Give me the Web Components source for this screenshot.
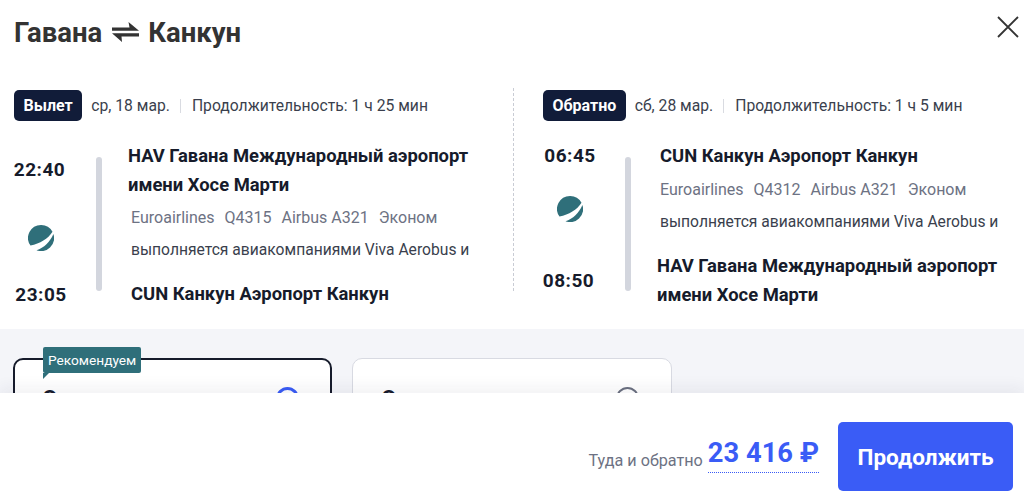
<!DOCTYPE html>
<html lang="ru">
<head>
<meta charset="utf-8">
<title>Гавана — Канкун</title>
<style>
  html, body { margin: 0; height: 500px; overflow: hidden; background: #fff; }
  body { font-family: Roboto, "Noto Sans", sans-serif; color: #161b2b; }
  .legs { display: flex; height: 241px; }
</style>
</head>
<body>
<route-title from="Гавана" to="Канкун"></route-title>
<div class="legs">
  <flight-leg class="out" label="Вылет" date="ср, 18 мар." duration="1 ч 25 мин" dep="22:40" arr="23:05">
    <div slot="start" style="margin-left:-3px">HAV Гавана Международный аэропорт<br>имени Хосе Марти</div>
    <span slot="meta">Euroairlines</span><span slot="meta">Q4315</span><span slot="meta">Airbus A321</span><span slot="meta">Эконом</span>
    <div slot="end">CUN Канкун Аэропорт Канкун</div>
  </flight-leg>
  <flight-leg class="back" divided label="Обратно" date="сб, 28 мар." duration="1 ч 5 мин" dep="06:45" arr="08:50">
    <div slot="start">CUN Канкун Аэропорт Канкун</div>
    <span slot="meta">Euroairlines</span><span slot="meta">Q4312</span><span slot="meta">Airbus A321</span><span slot="meta">Эконом</span>
    <div slot="end" style="margin-left:-3px">HAV Гавана Международный аэропорт<br>имени Хосе Марти</div>
  </flight-leg>
</div>
<tariff-row>
  <tariff-card selected tag="Рекомендуем" name="Эконом"></tariff-card>
  <tariff-card name="Эконом"></tariff-card>
</tariff-row>
<price-footer caption="Туда и обратно" price="23 416 ₽" action="Продолжить"></price-footer>

<script>
class RouteTitle extends HTMLElement {
  constructor() {
    super();
    this._root = this.attachShadow({mode: 'open'});
    this._root.innerHTML = `
    <style>
      :host { display: flex; align-items: center; height: 88px; box-sizing: border-box; padding: 0 5px 22px 14px; }
      h1 { margin: 0; font-size: 27.500px; font-weight: 700; line-height: 36px; color: #333; display: flex; align-items: center; gap: 9px; }
      h1 svg { margin-top: -3px; }
      button { margin-left: auto; margin-top: -12px; border: 0; padding: 0; background: none; width: 22px; height: 22px; }
      svg { display: block; }
    </style>
    <h1>${this.getAttribute('from')}
      <svg width="28" height="20" viewBox="0 0 28 20"><path fill="#333" d="M1 5.500h17.500l-1-5.500 10.500 8.800H1zM1 11.200h27v3.300H10.500l.5 5.500z"/></svg>
      ${this.getAttribute('to')}</h1>
    <button aria-label="Закрыть"><svg width="22" height="22" viewBox="0 0 22 22"><path d="M1 1l20 20M21 1L1 21" stroke="#333" stroke-width="1.800" fill="none"/></svg></button>`;
  }
}

class FlightLeg extends HTMLElement {
  constructor() {
    super();
    const a = name => this.getAttribute(name);
    this._root = this.attachShadow({mode: 'open'});
    this._root.innerHTML = `
    <style>
      :host { display: block; flex: 0 0 513px; box-sizing: border-box; padding: 2px 0 0 14px; position: relative; }
      :host([divided]) { flex: 1 1 0; padding-left: 30px; }
      :host([divided])::before { content: ""; position: absolute; left: 0; top: 0; height: 203px; border-left: 1px dashed #c9ccd4; }
      .head { display: flex; align-items: center; height: 31px; font-size: 15.700px; color: #3a3f4d; }
      .pill { background: #111c39; color: #fff; font-size: 16px; font-weight: 700; border-radius: 5px; height: 31px; line-height: 31px; padding: 0 9.500px; margin-right: 9px; }
      .sep { width: 1px; height: 14px; background: #d9dbe1; margin: 0 11px 0 10px; }
      .body { display: grid; grid-template-columns: 82px 35px 1fr; margin-top: 22px; height: 165px; }
      .times { width: 51px; display: flex; flex-direction: column; align-items: center; font-size: 19px; letter-spacing: .5px; font-weight: 700; line-height: 24px; white-space: nowrap; }
      .bar { width: 6px; background: #d3d6de; border-radius: 3px; margin-top: 14px; height: 134px; }
      .route { font-size: 18.400px; font-weight: 700; line-height: 29px; }
      .meta { display: flex; gap: 10px; font-size: 16px; color: #6d7283; line-height: 24px; }
      .note { font-size: 15.650px; color: #3a3f4d; line-height: 24px; white-space: nowrap; }
      svg { display: block; }
    </style>
    <div class="head">
      <span class="pill">${a('label')}</span><span>${a('date')}</span><span class="sep"></span><span>Продолжительность: ${a('duration')}</span>
    </div>
    <div class="body">
      <div class="times">
        <span class="dep">${a('dep')}</span>
        <svg class="logo" width="26" height="26" viewBox="0 0 26 26"><path fill="#2f6f7a" fill-rule="evenodd" d="M13 0a13 13 0 0 1 11.500 6.800C20 14 12 18.500 2.500 20.600A13 13 0 0 1 13 0zM25.400 9A13 13 0 0 1 8.500 25.200C16 23 22 17 25.400 9z"/></svg>
        <span class="arr">${a('arr')}</span>
      </div>
      <div class="bar"></div>
      <div class="info">
        <div class="route"><slot name="start"></slot></div>
        <div class="meta"><slot name="meta"></slot></div>
        <div class="note">выполняется авиакомпаниями Viva Aerobus и</div>
        <div class="route end"><slot name="end"></slot></div>
      </div>
    </div>`;
    const out = !this.hasAttribute('divided');
    const q = s => this._root.querySelector(s);
    // the two legs place their rows a little differently
    q('.dep').style.margin = out ? '15px 0 0 0' : '1px 0 0 3px';
    q('.logo').style.margin = out ? '43px 0 0 2px' : '28px 0 0 3px';
    q('.arr').style.margin = out ? '32px 0 0 3px' : '47px 0 0 0';
    q('.meta').style.margin = out ? '7px 0 0' : '8px 0 0';
    q('.note').style.margin = '8px 0 0';
    q('.end').style.margin = '17px 0 0';
    q('.info').style.marginTop = '-2px';
  }
}

class TariffRow extends HTMLElement {
  constructor() {
    super();
    this._root = this.attachShadow({mode: 'open'});
    this._root.innerHTML = `
    <style>
      :host { display: flex; gap: 20px; height: 64px; box-sizing: border-box; padding: 29px 0 0 13px; background: #f4f5f9; overflow: hidden; }
    </style>
    <slot></slot>`;
  }
}

class TariffCard extends HTMLElement {
  constructor() {
    super();
    const tag = this.getAttribute('tag');
    this._root = this.attachShadow({mode: 'open'});
    this._root.innerHTML = `
    <style>
      :host { display: block; position: relative; box-sizing: border-box; width: 320px; height: 120px; background: #fff; border: 1px solid #d8dae2; border-radius: 10px; padding: 25px 32px 0 29px; }
      :host([selected]) { width: 319px; border: 2px solid #161b2b; padding: 24px 31px 0 28px; }
      .row { display: flex; justify-content: space-between; align-items: flex-start; }
      .name { font-size: 22px; font-weight: 700; line-height: 30px; color: #161b2b; }
      .radio { width: 23px; height: 23px; box-sizing: border-box; border: 2px solid #6b7080; border-radius: 50%; margin-top: 3px; }
      :host([selected]) .radio { border: 3px solid #3a5cf6; }
      .tag { position: absolute; left: 28px; top: -13px; height: 26px; line-height: 26px; padding: 0 5px; background: #2f6f7a; color: #fff; font-size: 13.700px; border-radius: 2px; }
      .tag::after { content: ""; position: absolute; left: 0; top: 26px; border-top: 6px solid #2f6f7a; border-right: 6px solid transparent; }
    </style>
    ${tag ? `<div class="tag">${tag}</div>` : ''}
    <div class="row"><span class="name">${this.getAttribute('name')}</span><span class="radio"></span></div>`;
  }
}

class PriceFooter extends HTMLElement {
  constructor() {
    super();
    this._root = this.attachShadow({mode: 'open'});
    this._root.innerHTML = `
    <style>
      :host { display: flex; align-items: flex-end; justify-content: flex-end; position: relative; height: 107px; box-sizing: border-box; padding: 0 11px 9px 0; background: #fff; box-shadow: 0 -6px 14px rgba(30,35,60,.06); }
      .cap { font-size: 16.200px; line-height: 20px; color: #6d7283; margin: 0 5px 20px 0; }
      .price { font-size: 27.300px; font-weight: 700; line-height: 36px; color: #3a5cf6; border-bottom: 1px dotted #3a5cf6; margin: 0 19px 18px 0; padding-bottom: 1px; }
      button { width: 175px; height: 69px; border: 0; border-radius: 5px; background: #3a5cf6; color: #fff; font: 700 22.500px Roboto, "Noto Sans", sans-serif; }
    </style>
    <span class="cap">${this.getAttribute('caption')}</span>
    <span class="price">${this.getAttribute('price')}</span>
    <button>${this.getAttribute('action')}</button>`;
  }
}

window.customElements.define('route-title', RouteTitle);
window.customElements.define('flight-leg', FlightLeg);
window.customElements.define('tariff-row', TariffRow);
window.customElements.define('tariff-card', TariffCard);
window.customElements.define('price-footer', PriceFooter);
</script>
</body>
</html>
